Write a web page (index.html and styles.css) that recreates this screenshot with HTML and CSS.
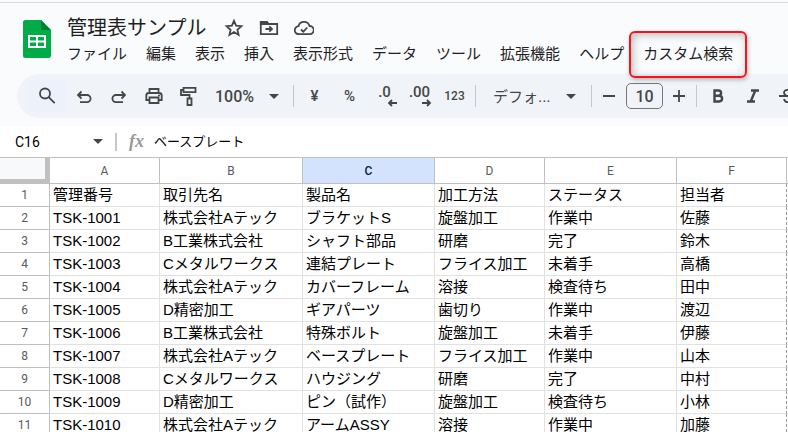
FILE: index.html
```html
<!DOCTYPE html>
<html lang="ja">
<head>
    <meta charset="UTF-8">
    <meta name="viewport" content="width=device-width, initial-scale=1.0">
    <title>管理表サンプル</title>
    <link rel="stylesheet" href="styles.css">
</head>
<body>
    <header>
        <svg class="logo" viewBox="0 0 28 38">
            <path fill="#00ac47" d="M2.500 0H18l10 10v25.500a2.500 2.500 0 0 1-2.500 2.500h-23A2.500 2.500 0 0 1 0 35.500v-33A2.500 2.500 0 0 1 2.500 0z"/>
            <path fill="#00832d" d="M18 0l10 10H18z"/>
            <path fill="#fff" fill-rule="evenodd" d="M5 15h18v13H5zM7 17v3.500h6V17zM15 17v3.500h6V17zM7 22.500V26h6v-3.500zM15 22.500V26h6v-3.500z"/>
        </svg>
        <div class="heading">
            <div class="title-row">
                <h1>管理表サンプル</h1>
                <button class="title-btn" aria-label="スター"><svg viewBox="0 0 20 20"><path d="M10 2.800l2.100 4.900 5.300.500-4 3.500 1.200 5.200-4.600-2.800-4.600 2.800 1.200-5.200-4-3.500 5.300-.500z"/></svg></button>
                <button class="title-btn" aria-label="移動"><svg viewBox="0 0 20 20"><path d="M1.800 4h6l1.700 2h8.700v10.200H1.800zM6.500 11h6M10.300 8.300l2.700 2.700-2.700 2.700"/><path class="solid" d="M1.800 4h6l1.700 2H1.800z"/></svg></button>
                <button class="title-btn" aria-label="保存状況"><svg viewBox="0 0 20 20"><path d="M5 16.200a4 4 0 0 1-.500-8 5.700 5.700 0 0 1 11-.200 4.100 4.100 0 0 1 .300 8.200zM7 11.500l2.300 2.200 4-4.200"/></svg></button>
            </div>
            <nav>
                <button>ファイル</button>
                <button>編集</button>
                <button>表示</button>
                <button>挿入</button>
                <button>表示形式</button>
                <button>データ</button>
                <button>ツール</button>
                <button>拡張機能</button>
                <button>ヘルプ</button>
                <button class="marked">カスタム検索</button>
            </nav>
        </div>
    </header>

    <div class="toolbar">
        <button class="search" aria-label="検索"><svg viewBox="0 0 20 20"><circle cx="8" cy="7.500" r="5"/><path d="M11.700 11.200l6 6"/></svg></button>
        <button aria-label="元に戻す"><svg viewBox="0 0 20 20"><path d="M7.500 5.500L4 9l3.500 3.500M4.500 9H13a3.600 3.600 0 0 1 0 7.200H6"/></svg></button>
        <button aria-label="やり直し"><svg viewBox="0 0 20 20"><path d="M12.500 5.500L16 9l-3.500 3.500M15.500 9H7a3.600 3.600 0 0 0 0 7.200h7"/></svg></button>
        <button aria-label="印刷"><svg viewBox="0 0 20 20"><path d="M5.500 7V3h9v4M5.500 14H2.300V9.500A2.500 2.500 0 0 1 4.800 7h10.400a2.500 2.500 0 0 1 2.500 2.500V14h-3.200M5.500 11.500h9V17h-9z"/><circle class="solid dot" cx="15" cy="9.500" r="1"/></svg></button>
        <button aria-label="書式を貼り付け"><svg viewBox="0 0 20 20"><path d="M4.500 1.800h12v4.400h-12zM4.500 4H2v5h8.500v3M8.500 12.500h4V19h-4z"/></svg></button>
        <label class="drop zoom">
            <select aria-label="ズーム"><option>100%</option></select>
            <svg viewBox="0 0 10 5"><path d="M0 0h10L5 5z"/></svg>
        </label>
        <span class="divider"></span>
        <button class="sign" aria-label="通貨">¥</button>
        <button class="sign" aria-label="パーセント">%</button>
        <button class="decimal" aria-label="小数点以下の桁数を減らす"><span>.0</span><svg viewBox="0 0 10 8"><path d="M10 4H2M5 1L2 4l3 3"/></svg></button>
        <button class="decimal" aria-label="小数点以下の桁数を増やす"><span>.00</span><svg viewBox="0 0 10 8"><path d="M0 4h8M5 1l3 3-3 3"/></svg></button>
        <button class="format">123</button>
        <span class="divider"></span>
        <label class="drop font">
            <select aria-label="フォント"><option>デフォ...</option></select>
            <svg viewBox="0 0 10 5"><path d="M0 0h10L5 5z"/></svg>
        </label>
        <span class="divider"></span>
        <button class="step" aria-label="縮小"><svg viewBox="0 0 20 20"><path d="M4 10h12"/></svg></button>
        <input class="size" type="text" value="10" aria-label="フォントサイズ">
        <button class="step" aria-label="拡大"><svg viewBox="0 0 20 20"><path d="M4 10h12M10 4v12"/></svg></button>
        <span class="divider"></span>
        <button aria-label="太字"><svg class="letter" viewBox="0 0 20 20"><path d="M6.500 4.500h4a2.500 2.500 0 0 1 0 5.200h-4zM6.500 9.700h4.700a2.800 2.800 0 0 1 0 5.800H6.500z"/></svg></button>
        <button aria-label="斜体"><svg class="letter" viewBox="0 0 20 20"><path d="M8 4.500h8M4 15.500h8M12.300 4.500l-4.600 11"/></svg></button>
        <button aria-label="取り消し線"><svg viewBox="0 0 20 20"><path d="M1 10h18M14 6.500C13.500 4.500 12 3.800 10 3.800c-2.500 0-4 1.200-4 3 0 1.400 1 2.200 3 3.200M6 13c.500 2 2 3.200 4 3.200 2.500 0 4-1.200 4-3"/></svg></button>
    </div>

    <div class="formula-bar">
        <input class="name-box" type="text" value="C16" aria-label="名前ボックス">
        <button class="name-arrow" aria-label="名前の一覧"><svg viewBox="0 0 10 5"><path d="M0 0h10L5 5z"/></svg></button>
        <span class="divider"></span>
        <label class="fx" for="formula">fx</label>
        <input class="formula" id="formula" type="text" value="ベースプレート">
    </div>

    <main>
        <table>
            <colgroup>
                <col class="w-head"><col class="w-a"><col class="w-b"><col class="w-c"><col class="w-a"><col class="w-c"><col class="w-a"><col class="w-a">
            </colgroup>
            <thead>
                <tr><td class="corner"></td><th>A</th><th>B</th><th class="active">C</th><th>D</th><th>E</th><th>F</th><th></th></tr>
            </thead>
            <tbody>
                <tr><th>1</th><td>管理番号</td><td>取引先名</td><td>製品名</td><td>加工方法</td><td>ステータス</td><td>担当者</td><td></td></tr>
                <tr><th>2</th><td>TSK-1001</td><td>株式会社Aテック</td><td>ブラケットS</td><td>旋盤加工</td><td>作業中</td><td>佐藤</td><td></td></tr>
                <tr><th>3</th><td>TSK-1002</td><td>B工業株式会社</td><td>シャフト部品</td><td>研磨</td><td>完了</td><td>鈴木</td><td></td></tr>
                <tr><th>4</th><td>TSK-1003</td><td>Cメタルワークス</td><td>連結プレート</td><td>フライス加工</td><td>未着手</td><td>高橋</td><td></td></tr>
                <tr><th>5</th><td>TSK-1004</td><td>株式会社Aテック</td><td>カバーフレーム</td><td>溶接</td><td>検査待ち</td><td>田中</td><td></td></tr>
                <tr><th>6</th><td>TSK-1005</td><td>D精密加工</td><td>ギアパーツ</td><td>歯切り</td><td>作業中</td><td>渡辺</td><td></td></tr>
                <tr><th>7</th><td>TSK-1006</td><td>B工業株式会社</td><td>特殊ボルト</td><td>旋盤加工</td><td>未着手</td><td>伊藤</td><td></td></tr>
                <tr><th>8</th><td>TSK-1007</td><td>株式会社Aテック</td><td>ベースプレート</td><td>フライス加工</td><td>作業中</td><td>山本</td><td></td></tr>
                <tr><th>9</th><td>TSK-1008</td><td>Cメタルワークス</td><td>ハウジング</td><td>研磨</td><td>完了</td><td>中村</td><td></td></tr>
                <tr><th>10</th><td>TSK-1009</td><td>D精密加工</td><td>ピン（試作）</td><td>旋盤加工</td><td>検査待ち</td><td>小林</td><td></td></tr>
                <tr><th>11</th><td>TSK-1010</td><td>株式会社Aテック</td><td>アームASSY</td><td>溶接</td><td>作業中</td><td>加藤</td><td></td></tr>
            </tbody>
        </table>
    </main>
</body>
</html>
```

FILE: styles.css
```css
* {
    box-sizing: border-box;
}
body {
    margin: 0;
    height: 100vh;
    display: flex;
    flex-direction: column;
    overflow: hidden;
    background-color: #f9fbfd;
    color: #1f1f1f;
    font-family: "Liberation Sans", "Noto Sans CJK JP", sans-serif;
}
button, input, select {
    margin: 0;
    padding: 0;
    border: 0;
    background: none;
    color: inherit;
    font-family: inherit;
}
select {
    appearance: none;
}

/* title and menus */
header {
    display: flex;
    flex: none;
    gap: 16px;
    margin-top: 2px;
    padding: 12px 0 8px 23px;
    border-top: 1px solid #dadce0;
}
.logo {
    width: 28px;
    height: 38px;
    flex: none;
    margin-top: 5px;
}
.title-row {
    display: flex;
    align-items: center;
    height: 26px;
}
h1 {
    margin: 0 18px 0 0;
    font-size: 20px;
    line-height: 26px;
    font-weight: 400;
    white-space: nowrap;
}
.title-btn {
    width: 20px;
    height: 20px;
    margin-right: 15px;
}
svg {
    display: block;
}
.title-btn svg, .toolbar button svg {
    width: 20px;
    height: 20px;
    fill: none;
    stroke: #444746;
    stroke-width: 1.8;
}
svg .solid {
    fill: #444746;
}
svg .dot {
    stroke: none;
}
nav {
    display: flex;
    gap: 19px;
}
nav button {
    flex: none;
    position: relative;
    height: 25px;
    font-size: 15px;
    line-height: 25px;
    white-space: nowrap;
}
.marked::after {
    content: "";
    position: absolute;
    inset: -10px -14px -12px;
    border: 2px solid #f5141b;
    border-radius: 6px;
    box-shadow: 1px 2px 4px rgba(0, 0, 0, 0.25), inset 2px 2px 8px rgba(0, 0, 0, 0.25);
}

/* toolbar */
.toolbar {
    display: flex;
    flex: none;
    align-items: center;
    height: 44px;
    margin: 0 0 8px 17px;
    padding: 0 0 0 11px;
    border-radius: 22px 0 0 22px;
    background-color: #f0f4f9;
    color: #444746;
    overflow: hidden;
}
.toolbar button {
    display: flex;
    flex: none;
    align-items: center;
    justify-content: center;
    width: 35px;
    height: 32px;
    font-family: Roboto, sans-serif;
    font-weight: 500;
}
.toolbar button.search {
    width: 38px;
    background-color: #edf1fb;
}
.drop {
    display: flex;
    flex: none;
    align-items: center;
}
.drop svg, .name-arrow svg {
    width: 10px;
    height: 5px;
    fill: #444746;
}
.zoom {
    width: 84px;
    padding-left: 9px;
}
.zoom select {
    width: 54px;
    font-family: Roboto, sans-serif;
    font-size: 16px;
    font-weight: 500;
}
.font {
    width: 109px;
    padding-left: 14px;
}
.font select {
    width: 73px;
    font-size: 15px;
}
.divider {
    flex: none;
    width: 1px;
    height: 22px;
    margin: 0 3px;
    background-color: #c7c7c7;
}
.toolbar .sign {
    font-size: 15px;
}
.toolbar .decimal {
    flex-direction: column;
    font-size: 15px;
    line-height: 14px;
}
.toolbar .decimal svg {
    width: 10px;
    height: 8px;
    margin-left: 14px;
}
.toolbar .format {
    font-size: 12px;
}
.toolbar .step {
    width: 28px;
}
.size {
    flex: none;
    width: 37px;
    height: 26px;
    margin: 0 2px 0 3px;
    border: 1px solid #747775;
    border-radius: 5px;
    font-family: Roboto, sans-serif;
    font-size: 16px;
    font-weight: 500;
    text-align: center;
}
.toolbar button svg.letter {
    stroke-width: 2.4;
}

/* name box and formula */
.formula-bar {
    display: flex;
    flex: none;
    align-items: center;
    height: 31px;
    padding-left: 15px;
    background-color: #fff;
    color: #000;
}
.name-box {
    width: 78px;
    font-family: Roboto, sans-serif;
    font-size: 14px;
}
.name-arrow {
    width: 20px;
}
.formula-bar .divider {
    width: 2px;
    height: 18px;
    margin: 0 12px 0 2px;
}
.fx {
    width: 25px;
    color: #989898;
    font-family: "Liberation Serif", serif;
    font-size: 18px;
    font-style: italic;
    font-weight: 700;
}
.formula {
    flex: 1;
    min-width: 0;
    padding-bottom: 2px;
    font-size: 13px;
}

/* sheet */
main {
    flex: 1;
    min-height: 0;
    overflow: hidden;
    background-color: #fff;
    border-top: 1px solid #c0c0c0;
}
table {
    table-layout: fixed;
    width: 897px;
    border-collapse: separate;
    border-spacing: 0;
    color: #000;
}
.w-head {
    width: 50px;
}
.w-a {
    width: 110px;
}
.w-b {
    width: 143px;
}
.w-c {
    width: 132px;
}
th, td {
    height: 23px;
    padding: 0;
    border-right: 1px solid #e1e1e1;
    border-bottom: 1px solid #e1e1e1;
    font-size: 15px;
    line-height: 22px;
    white-space: nowrap;
}
th {
    border-color: #c0c0c0;
    color: #575b5f;
    font-family: Roboto, sans-serif;
    font-size: 12px;
    font-weight: 400;
    text-align: center;
}
thead th, .corner {
    height: 26px;
}
thead .active {
    background-color: #d3e3fd;
    color: #041e49;
    font-weight: 500;
}
.corner {
    border-right: 5px solid #c0c0c0;
    border-bottom: 5px solid #c0c0c0;
    background-color: #f8f9fa;
}
tbody td {
    padding-left: 3px;
}
tbody td:nth-child(7) {
    border-right: 1px dashed #999;
}
```
